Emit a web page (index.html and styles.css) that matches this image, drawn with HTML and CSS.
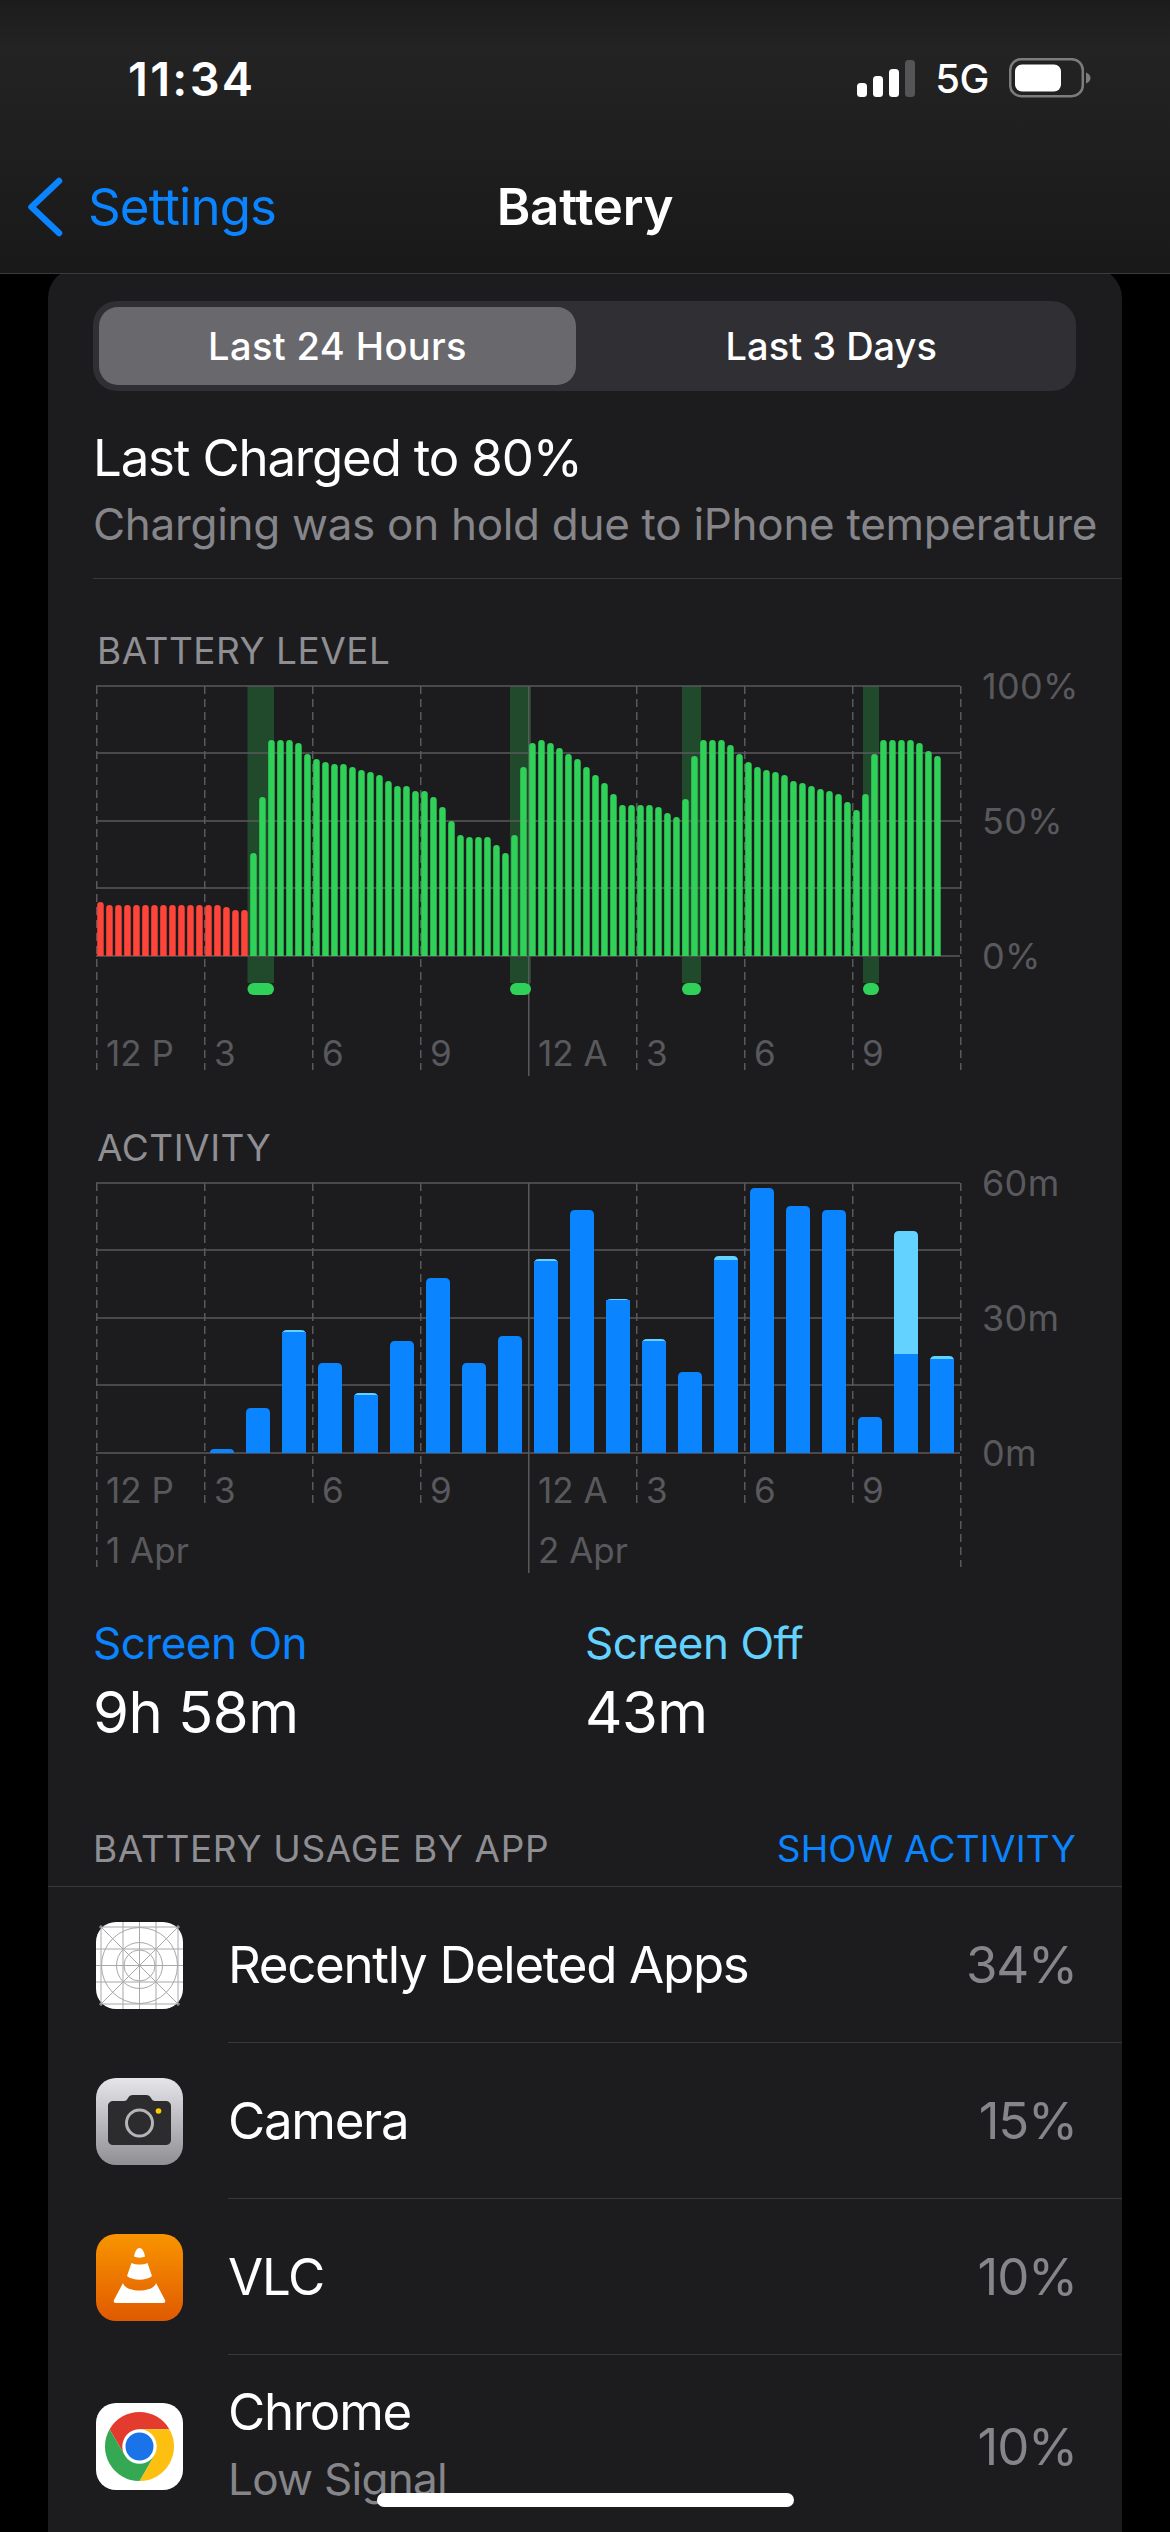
FILE: index.html
```html
<!DOCTYPE html>
<html lang="en">
<head>
    <meta charset="UTF-8">
    <meta name="viewport" content="width=device-width, initial-scale=1.0">
    <title>Battery</title>
    <link rel="stylesheet" href="styles.css">
</head>
<body>
    <header class="top-bar">
        <div class="status-bar">
            <span class="time">11:34</span>
            <div class="status-icons">
                <svg class="signal" width="58" height="37" viewBox="0 0 58 37">
                    <rect x="0" y="23" width="10" height="14" rx="3.5" fill="#fff"/>
                    <rect x="16" y="16" width="10" height="21" rx="3.5" fill="#fff"/>
                    <rect x="32" y="9" width="10" height="28" rx="3.5" fill="#fff"/>
                    <rect x="48" y="0" width="10" height="37" rx="3.5" fill="#555557"/>
                </svg>
                <span class="network">5G</span>
                <svg class="battery-icon" width="82" height="40" viewBox="0 0 82 40">
                    <rect x="1.2" y="1.2" width="72.6" height="37" rx="11" fill="none" stroke="#7c7c7c" stroke-width="2.5"/>
                    <rect x="6" y="6.5" width="46" height="27" rx="7" fill="#fff"/>
                    <path d="M77 14.5c3 1 4.5 3 4.5 5.5s-1.5 4.5-4.5 5.5z" fill="#7c7c7c"/>
                </svg>
            </div>
        </div>
        <nav class="nav-bar">
            <a class="back-link">
                <svg width="36" height="60" viewBox="0 0 36 60">
                    <path d="M31 4 3.5 30 31 56" fill="none" stroke="#0a84ff" stroke-width="6.5" stroke-linecap="round" stroke-linejoin="round"/>
                </svg>
                <span>Settings</span>
            </a>
            <h1>Battery</h1>
        </nav>
    </header>

    <main class="card">
        <div class="segments">
            <div class="segment active">Last 24 Hours</div>
            <div class="segment">Last 3 Days</div>
        </div>

        <div class="summary">
            <p class="summary-title">Last Charged to 80%</p>
            <p class="summary-sub">Charging was on hold due to iPhone temperature</p>
        </div>

        <h2 class="chart-title">BATTERY LEVEL</h2>
        <div class="chart">
            <svg class="chart-svg" id="levelChart" width="880" height="410" viewBox="0 0 880 410"></svg>
            <div class="plot-labels level-labels">
                <div class="hours">
                    <span>12 P</span><span>3</span><span>6</span><span>9</span>
                    <span>12 A</span><span>3</span><span>6</span><span>9</span>
                </div>
            </div>
            <div class="y-axis">
                <span>100%</span>
                <span>50%</span>
                <span>0%</span>
            </div>
        </div>

        <h2 class="chart-title">ACTIVITY</h2>
        <div class="chart">
            <svg class="chart-svg" id="activityChart" width="880" height="410" viewBox="0 0 880 410"></svg>
            <div class="plot-labels activity-labels">
                <div class="hours">
                    <span>12 P</span><span>3</span><span>6</span><span>9</span>
                    <span>12 A</span><span>3</span><span>6</span><span>9</span>
                </div>
                <div class="dates">
                    <span>1 Apr</span>
                    <span>2 Apr</span>
                </div>
            </div>
            <div class="y-axis">
                <span>60m</span>
                <span>30m</span>
                <span>0m</span>
            </div>
        </div>

        <div class="legend">
            <div>
                <p class="legend-label on">Screen On</p>
                <p class="legend-value">9h 58m</p>
            </div>
            <div>
                <p class="legend-label off">Screen Off</p>
                <p class="legend-value">43m</p>
            </div>
        </div>

        <div class="usage-header">
            <span>BATTERY USAGE BY APP</span>
            <a>SHOW ACTIVITY</a>
        </div>

        <ul class="app-list">
            <li class="app-row">
                <svg class="app-icon" width="87" height="87" viewBox="0 0 87 87">
                    <rect width="87" height="87" rx="20" fill="#fff"/>
                    <g fill="none" stroke="#a8a8a8" stroke-width="1">
                        <circle cx="43.5" cy="43.5" r="38"/>
                        <circle cx="43.5" cy="43.5" r="23"/>
                        <circle cx="43.5" cy="43.5" r="15.5"/>
                        <path d="M27 0v87M43.5 0v87M60 0v87M0 27h87M0 43.5h87M0 60h87M5 3v81M82 3v81M3 5h81M3 82h81M5 5l77 77M82 5 5 82"/>
                    </g>
                </svg>
                <div class="app-body">
                    <div class="app-text"><p class="app-name">Recently Deleted Apps</p></div>
                    <span class="app-pct">34%</span>
                </div>
            </li>
            <li class="app-row">
                <svg class="app-icon" width="87" height="87" viewBox="0 0 87 87">
                    <defs>
                        <linearGradient id="cameraBg" x1="0" y1="0" x2="0" y2="1">
                            <stop offset="0" stop-color="#e6e6ea"/>
                            <stop offset="1" stop-color="#8f8f94"/>
                        </linearGradient>
                    </defs>
                    <rect width="87" height="87" rx="20" fill="url(#cameraBg)"/>
                    <path d="M17 23h11c2 0 3-1 4-3 1-2 2.5-3 5-3h13c2.5 0 4 1 5 3 1 2 2 3 4 3h11c2.8 0 5 2.2 5 5v34c0 2.8-2.2 5-5 5H17c-2.8 0-5-2.2-5-5V28c0-2.8 2.2-5 5-5z" fill="#2c2c2e"/>
                    <circle cx="43.5" cy="45" r="13" fill="none" stroke="#b5b5b9" stroke-width="3"/>
                    <circle cx="62.5" cy="33" r="2.8" fill="#ffcc00"/>
                </svg>
                <div class="app-body">
                    <div class="app-text"><p class="app-name">Camera</p></div>
                    <span class="app-pct">15%</span>
                </div>
            </li>
            <li class="app-row">
                <svg class="app-icon" width="87" height="87" viewBox="0 0 87 87">
                    <defs>
                        <linearGradient id="vlcBg" x1="0" y1="0" x2="0" y2="1">
                            <stop offset="0" stop-color="#f99500"/>
                            <stop offset="1" stop-color="#e05a00"/>
                        </linearGradient>
                    </defs>
                    <rect width="87" height="87" rx="20" fill="url(#vlcBg)"/>
                    <g fill="#fff">
                        <path d="M38 22.5c1-5.5 3-8.5 5.5-8.5s4.5 3 5.5 8.5c-3 1.5-8 1.5-11 0z"/>
                        <path d="M35.5 29c5 2 11 2 16 0l4.5 13c-6 5-19 5-25 0z"/>
                        <path d="M27 49c1 4.5 8 7.5 16.5 7.5S59 53.5 60 49l9 17c.8 1.8 0 3-2 3H20c-2 0-2.8-1.2-2-3z"/>
                    </g>
                </svg>
                <div class="app-body">
                    <div class="app-text"><p class="app-name">VLC</p></div>
                    <span class="app-pct">10%</span>
                </div>
            </li>
            <li class="app-row tall">
                <svg class="app-icon" width="87" height="87" viewBox="0 0 87 87">
                    <rect width="87" height="87" rx="20" fill="#fff"/>
                    <path d="M73.4 26.25A34.5 34.5 0 0 0 13.6 26.25L28.56 52.1 43.5 43.5V26.25z" fill="#e33b2e"/>
                    <path d="M73.4 26.25A34.5 34.5 0 0 1 43.5 78L58.44 52.1 43.5 43.5V26.25z" fill="#fdc010"/>
                    <path d="M43.5 78A34.5 34.5 0 0 1 13.6 26.25L28.56 52.1H58.44z" fill="#34a853"/>
                    <circle cx="43.5" cy="43.5" r="17.2" fill="#fff"/>
                    <circle cx="43.5" cy="43.5" r="14" fill="#1a73e8"/>
                </svg>
                <div class="app-body">
                    <div class="app-text">
                        <p class="app-name">Chrome</p>
                        <p class="app-sub">Low Signal</p>
                    </div>
                    <span class="app-pct">10%</span>
                </div>
            </li>
        </ul>
    </main>

    <div class="home-indicator"></div>

    <script src="chart.js"></script>
</body>
</html>
```
FILE: styles.css
```css
* {
    box-sizing: border-box;
}

body {
    margin: 0;
    width: 1170px;
    height: 2532px;
    overflow: hidden;
    position: relative;
    background: #000;
    color: #fff;
    font-family: Inter, "Noto Sans", sans-serif;
}

p, h1, h2, ul {
    margin: 0;
    padding: 0;
    font-weight: 400;
}

/* header */
.top-bar {
    position: relative;
    z-index: 1;
    height: 274px;
    background: linear-gradient(to bottom, #1c1c1c, #232323 18%, #191919);
    border-bottom: 1px solid #3b3b3d;
}

.status-bar {
    height: 156px;
    padding: 0 79px 0 128px;
    display: flex;
    justify-content: space-between;
    align-items: center;
}

.time {
    font-size: 47px;
    font-weight: 600;
    letter-spacing: 2.3px;
}

.status-icons {
    display: flex;
    align-items: center;
}

.network {
    margin: 0 20px;
    font-size: 40px;
    font-weight: 500;
    letter-spacing: -0.5px;
}

.nav-bar {
    height: 97px;
    margin-top: 2px;
    display: grid;
    grid-template-columns: 1fr auto 1fr;
    align-items: center;
}

.back-link {
    display: flex;
    align-items: center;
    gap: 24px;
    padding-left: 28px;
    color: #0a84ff;
    font-size: 51px;
    letter-spacing: -0.9px;
}

.nav-bar h1 {
    font-size: 51px;
    font-weight: 600;
    letter-spacing: -0.2px;
}

/* card */
.card {
    height: 2264px;
    margin: -6px 48px 0;
    padding-top: 33px;
    background: #1c1c1e;
    border-radius: 30px 30px 0 0;
    overflow: hidden;
}

.segments {
    display: grid;
    grid-template-columns: 1fr 1fr;
    width: 983px;
    height: 90px;
    margin-left: 45px;
    padding: 6px;
    background: #2f2f34;
    border-radius: 24px;
}

.segment {
    display: flex;
    align-items: center;
    justify-content: center;
    font-size: 38px;
    font-weight: 500;
    letter-spacing: 0.4px;
}

.segment.active {
    width: 477px;
    background: #69686d;
    border-radius: 19px;
}

.segment + .segment {
    padding-left: 8px;
    letter-spacing: 0;
}

.summary {
    margin-left: 45px;
    height: 188px;
    padding-top: 37px;
    border-bottom: 1px solid #38383a;
}

.summary-title {
    font-size: 51px;
    line-height: 60px;
    letter-spacing: -1.2px;
}

.summary-sub {
    margin-top: 10px;
    font-size: 44px;
    line-height: 52px;
    letter-spacing: -0.3px;
    color: #85858a;
    white-space: nowrap;
}

/* charts */
.chart-title {
    margin: 57px 0 0 49px;
    height: 30px;
    font-size: 37px;
    line-height: 30px;
    letter-spacing: 0.5px;
    color: #8e8e93;
}

.chart {
    position: relative;
    display: grid;
    grid-template-columns: 864px 1fr;
    height: 410px;
    margin-left: 48px;
}

.chart-svg {
    position: absolute;
    top: 0;
    left: 0;
}

.grid-line {
    stroke: #59595d;
    stroke-width: 1.5;
    fill: none;
}

.grid-dash {
    stroke-dasharray: 8 5;
}

.plot-labels {
    position: relative;
    color: #59595d;
    font-size: 35px;
    line-height: 40px;
}

.level-labels {
    padding-top: 367px;
}

.activity-labels {
    padding-top: 307px;
}

.hours {
    display: grid;
    grid-template-columns: repeat(8, 108px);
}

.hours span {
    padding-left: 10px;
}

.dates {
    display: grid;
    grid-template-columns: repeat(2, 432px);
    margin-top: 20px;
}

.dates span {
    padding-left: 10px;
}

.y-axis {
    position: relative;
    display: flex;
    flex-direction: column;
    justify-content: space-between;
    height: 310px;
    padding-left: 22px;
    color: #59595d;
    font-size: 36px;
    line-height: 40px;
    letter-spacing: 0.3px;
}

/* legend */
.legend {
    display: grid;
    grid-template-columns: 492px 1fr;
    margin: 45px 0 0 45px;
}

.legend-label {
    font-size: 44px;
    line-height: 50px;
    letter-spacing: -0.5px;
}

.legend-label.on {
    color: #0a84ff;
}

.legend-label.off {
    color: #64d2ff;
}

.legend-value {
    margin-top: 9px;
    font-size: 58px;
    line-height: 70px;
    letter-spacing: -0.5px;
}

/* app list */
.usage-header {
    display: flex;
    justify-content: space-between;
    height: 60px;
    margin-top: 80px;
    padding: 0 46px 15px 45px;
    border-bottom: 1px solid #38383a;
    font-size: 37px;
    line-height: 44px;
    color: #8e8e93;
    letter-spacing: 0.65px;
}

.usage-header a {
    color: #0a84ff;
    letter-spacing: 0.2px;
}

.app-list {
    list-style: none;
}

.app-row {
    display: flex;
    align-items: center;
    gap: 45px;
    height: 156px;
    padding-left: 48px;
}

.app-row.tall {
    height: 183px;
}

.app-icon {
    flex: none;
}

.app-body {
    flex: 1;
    align-self: stretch;
    display: flex;
    justify-content: space-between;
    align-items: center;
    padding-right: 45px;
    border-bottom: 1px solid #38383a;
}

.app-row.tall .app-body {
    border-bottom: none;
}

.app-row.tall .app-text {
    padding-bottom: 7px;
}

.app-name {
    font-size: 51px;
    line-height: 60px;
    letter-spacing: -1.3px;
}

.app-sub {
    margin-top: 11px;
    font-size: 44px;
    line-height: 52px;
    letter-spacing: -0.7px;
    color: #85858a;
}

.app-pct {
    font-size: 51px;
    letter-spacing: -1.2px;
    color: #85858a;
}

.home-indicator {
    position: absolute;
    left: 377px;
    bottom: 25px;
    width: 417px;
    height: 14px;
    background: #fff;
    border-radius: 7px;
}
```
FILE: chart.js
```js
// bar heights in px, one per 15 minutes
const levelRed = [54, 51, 51, 51, 51, 51, 51, 51, 51, 51, 51, 51, 51, 51, 49, 46, 46];
const levelGreen = [
    103, 159, 216, 216, 216, 213, 202, 197, 194, 192, 192, 189, 186, 184, 181, 175, 170, 170, 165, 165,
    159, 149, 135, 121, 119, 119, 119, 111, 103, 121, 189, 213, 216, 213, 208, 202, 197, 189, 181, 173, 162,
    151, 151, 151, 151, 149, 143, 139, 157, 200, 216, 216, 216, 211, 202, 194, 189, 186, 184, 181, 175,
    173, 170, 167, 165, 162, 154, 146, 162, 202, 216, 216, 216, 216, 213, 205, 200
];

// [slot, total height, screen off part]
const activity = [
    [3, 4, 0], [4, 45, 0], [5, 123, 2], [6, 90, 0], [7, 60, 2], [8, 112, 0], [9, 175, 0], [10, 90, 0],
    [11, 117, 0], [12, 194, 2], [13, 243, 0], [14, 154, 1], [15, 114, 2], [16, 81, 0], [17, 197, 4],
    [18, 265, 0], [19, 247, 0], [20, 243, 0], [21, 36, 0], [22, 222, 123], [23, 97, 3]
];

const bands = [[151.5, 26.5], [414, 21], [586, 19], [767, 16]];

const TOP = 20;
const BASE = 290;

function line(x1, y1, x2, y2, dashed) {
    const cls = dashed ? "grid-line grid-dash" : "grid-line";
    return `<path class="${cls}" d="M${x1} ${y1}L${x2} ${y2}"/>`;
}

function topRounded(x, y, w, h, r, fill) {
    const rr = Math.min(r, h);
    return `<path fill="${fill}" d="M${x} ${y + h}V${y + rr}Q${x} ${y} ${x + rr} ${y}H${x + w - rr}Q${x + w} ${y} ${x + w} ${y + rr}V${y + h}Z"/>`;
}

function drawGrid(hourBottom, edgeBottom) {
    let out = "";
    [TOP, 87, 155, 222, BASE].forEach(y => {
        out += line(0, y, 864, y, false);
    });
    for (let i = 0; i <= 8; i++) {
        const x = i * 108 + 0.75;
        if (i === 4) {
            out += line(x, TOP, x, 410, false);
        } else if (i === 0 || i === 8) {
            out += line(x, TOP, x, edgeBottom, true);
        } else {
            out += line(x, TOP, x, hourBottom, true);
        }
    }
    return out;
}

function drawLevel() {
    let out = "";
    bands.forEach(b => {
        out += `<rect x="${b[0]}" y="${TOP}" width="${b[1]}" height="297" fill="#214a2c"/>`;
    });
    out += drawGrid(404, 404);
    bands.forEach(b => {
        out += `<rect x="${b[0]}" y="317" width="${b[1]}" height="12" rx="6" fill="#30d158"/>`;
    });
    levelRed.concat(levelGreen).forEach((h, i) => {
        const fill = i < levelRed.length ? "#ff453a" : "#30d158";
        out += topRounded(1.2 + i * 9, BASE - h, 6.5, h, 3.25, fill);
    });
    document.getElementById("levelChart").innerHTML = out;
}

function drawActivity() {
    let out = drawGrid(344, 404);
    activity.forEach(a => {
        const x = a[0] * 36 + 6;
        if (a[2] > 0) {
            out += topRounded(x, BASE - a[1], 24, a[1], 5, "#64d2ff");
            out += `<rect x="${x}" y="${BASE - a[1] + a[2]}" width="24" height="${a[1] - a[2]}" fill="#0a84ff"/>`;
        } else {
            out += topRounded(x, BASE - a[1], 24, a[1], 5, "#0a84ff");
        }
    });
    document.getElementById("activityChart").innerHTML = out;
}

drawLevel();
drawActivity();
```
